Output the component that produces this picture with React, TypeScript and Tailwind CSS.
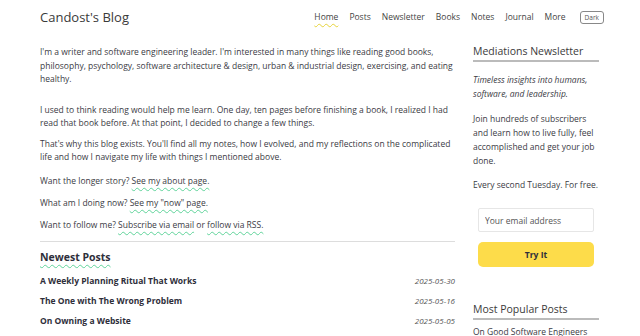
import React from "react";

const navItems = ["Home", "Posts", "Newsletter", "Books", "Notes", "Journal", "More"];

const posts = [
  { title: "A Weekly Planning Ritual That Works", date: "2025-05-30" },
  { title: "The One with The Wrong Problem", date: "2025-05-16" },
  { title: "On Owning a Website", date: "2025-05-05" },
];

const link =
  "underline decoration-wavy decoration-[#5fd39a] decoration-1 underline-offset-[3px]";

const App: React.FC = () => {
  return (
    <div className="min-h-screen bg-white font-['Open_Sans',sans-serif] text-[#3b3b45]">
      {/* header */}
      <header className="flex items-center justify-between pl-10 pr-9 pt-[3px] h-[32px]">
        <h1 className="text-[13px] text-[#3a3a3a] leading-none">Candost's Blog</h1>
        <nav className="flex items-center gap-[11px] text-[8.5px] text-[#444]">
          {navItems.map((item) => (
            <span
              key={item}
              className={
                item === "Home"
                  ? "underline decoration-wavy decoration-[#e6d33a] decoration-1 underline-offset-[3px]"
                  : ""
              }
            >
              {item}
            </span>
          ))}
          <span className="ml-[3px] border border-[#888] rounded-[3px] px-[4px] py-[1px] text-[6.5px] text-[#555]">
            Dark
          </span>
        </nav>
      </header>

      <div className="flex gap-[18px] px-10 pt-[11px]">
        {/* main column */}
        <main className="w-[415px] shrink-0 pt-[2px] text-[8.5px] leading-[13.5px]">
          <p>
            I'm a writer and software engineering leader. I'm interested in many things like reading good
            books, philosophy, psychology, software architecture &amp; design, urban &amp; industrial design,
            exercising, and eating healthy.
          </p>
          <p className="mt-[17px]">
            I used to think reading would help me learn. One day, ten pages before finishing a book, I
            realized I had read that book before. At that point, I decided to change a few things.
          </p>
          <p className="mt-[7px]">
            That's why this blog exists. You'll find all my notes, how I evolved, and my reflections on the
            complicated life and how I navigate my life with things I mentioned above.
          </p>
          <p className="mt-[10px]">
            Want the longer story? <span className={link}>See my about page.</span>
          </p>
          <p className="mt-[9px]">
            What am I doing now? <span className={link}>See my "now" page.</span>
          </p>
          <p className="mt-[8.5px]">
            Want to follow me? <span className={link}>Subscribe via email</span> or{" "}
            <span className={link}>follow via RSS.</span>
          </p>

          <hr className="mt-[9px] border-t border-[#ddd]" />

          <h2 className="mt-[7px] text-[10.5px] font-bold text-[#2e2e3a] leading-[16px]">
            <span className="underline decoration-wavy decoration-[#5fd39a] decoration-1 underline-offset-[3px]">
              Newest Posts
            </span>
          </h2>
          <ul className="mt-[9px] flex flex-col gap-[6.5px]">
            {posts.map((post) => (
              <li key={post.title} className="flex items-center justify-between leading-[13.5px]">
                <span className="font-bold text-[8.5px] text-[#2e2e3a]">{post.title}</span>
                <span className="italic text-[8px] text-[#555]">{post.date}</span>
              </li>
            ))}
          </ul>
        </main>

        {/* sidebar */}
        <aside className="w-[126px] shrink-0 text-[8.5px] leading-[14px]">
          <h3 className="text-[10.5px] leading-[16px] text-[#3a3a3a] pb-[1px] border-b-2 border-[#bbb] whitespace-nowrap">
            Mediations Newsletter
          </h3>
          <p className="mt-[11px] italic">
            Timeless insights into humans, software, and leadership.
          </p>
          <p className="mt-[11px]">
            Join hundreds of subscribers and learn how to live fully, feel accomplished and get your job
            done.
          </p>
          <p className="mt-[10px]">Every second Tuesday. For free.</p>

          <form className="mt-[16px] px-[5px] flex flex-col gap-[10px]">
            <input
              type="text"
              placeholder="Your email address"
              className="h-[24px] w-full border border-[#e6e6e6] rounded-[2px] px-[6px] text-[8.5px] placeholder:text-[#555] outline-none"
            />
            <button
              type="button"
              className="h-[25px] w-full rounded-[5px] bg-[#fddc4a] font-bold text-[8.5px] text-[#2e2e3a]"
            >
              Try It
            </button>
          </form>

          <h3 className="mt-[34px] text-[10.5px] leading-[16px] text-[#3a3a3a] pb-[1px] border-b-2 border-[#bbb] whitespace-nowrap">
            Most Popular Posts
          </h3>
          <p className="mt-[5px]">On Good Software Engineers</p>
        </aside>
      </div>
    </div>
  );
};

export default App;
